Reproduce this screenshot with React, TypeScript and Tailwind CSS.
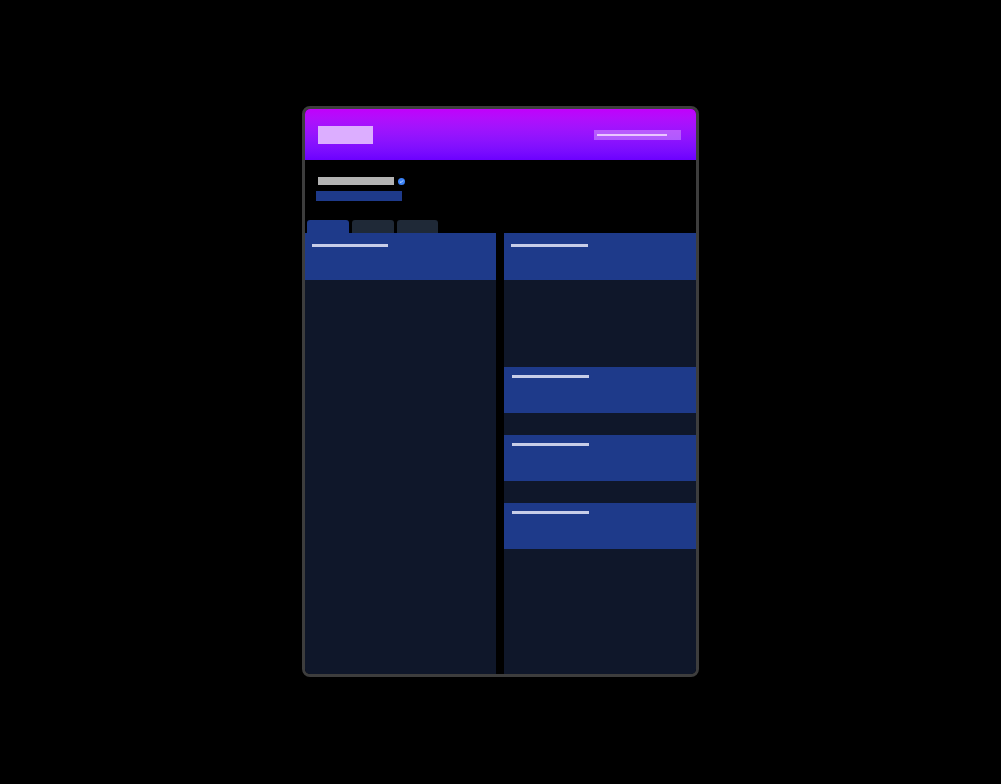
const tabs = [
  { key: "overview", active: true, width: "w-[42px]" },
  { key: "activity", active: false, width: "w-[42px]" },
  { key: "settings", active: false, width: "w-[41px]" },
];

function Bar({ className }: { className: string }) {
  return <div className={className} aria-hidden />;
}

function Card() {
  return (
    <div className="h-[46px] bg-[#1e3a8a] pt-[8px] pl-[8px]">
      <Bar className="h-[3px] w-[77px] bg-[#c7cde8]" />
    </div>
  );
}

export default function App() {
  return (
    <div
      className="flex h-screen w-full items-start justify-center bg-black pt-[106px]"
      style={{ fontFamily: "Inter, 'Liberation Sans', sans-serif" }}
    >
      <div className="flex h-[571px] w-[397px] flex-col overflow-hidden rounded-[8px] border-[3px] border-[#3d3d3d] bg-black">
        {/* header */}
        <header className="flex h-[51px] shrink-0 items-start justify-between bg-gradient-to-b from-[#c100fb] to-[#6c00ff] pl-[13px] pr-[15px]">
          <div className="mt-[17px] h-[18px] w-[55px] bg-[#dcaeff]" />
          <div className="mt-[21px] flex h-[10px] w-[87px] items-center bg-white/30 pl-[3px]">
            <div className="h-[2px] w-[70px] bg-[#e9c6ff]" />
          </div>
        </header>

        {/* profile */}
        <div className="flex shrink-0 flex-col pl-[11px] pt-[17px]">
          <div className="flex items-center gap-[4px] pl-[2px]">
            <div className="h-[8px] w-[76px] bg-[#b3b3b3]" />
            <span className="flex h-[7px] w-[7px] items-center justify-center rounded-full bg-[#3b82f6]">
              <svg viewBox="0 0 8 8" className="h-[5px] w-[5px]" aria-hidden>
                <path d="M1.5 4.2 L3.2 5.8 L6.5 2.2" fill="none" stroke="#dbeafe" strokeWidth="1.4" />
              </svg>
            </span>
          </div>
          <div className="mt-[6px] h-[10px] w-[86px] bg-[#1e3a8a]" />
        </div>

        {/* tabs */}
        <nav className="mt-[19px] flex shrink-0 gap-[3px] pl-[2px]">
          {tabs.map((tab) => (
            <div
              key={tab.key}
              className={`h-[13px] rounded-t-[3px] ${tab.width} ${tab.active ? "bg-[#1e3a8a]" : "bg-[#1f2937]"}`}
            />
          ))}
        </nav>

        {/* columns */}
        <div className="flex min-h-0 flex-1 gap-[8px]">
          <section className="flex w-[191px] flex-col bg-[#0f172a]">
            <div className="h-[47px] shrink-0 bg-[#1e3a8a] pl-[7px] pt-[11px]">
              <Bar className="h-[3px] w-[76px] bg-[#c7cde8]" />
            </div>
          </section>
          <section className="flex flex-1 flex-col bg-[#0f172a]">
            <div className="h-[47px] shrink-0 bg-[#1e3a8a] pl-[7px] pt-[11px]">
              <Bar className="h-[3px] w-[77px] bg-[#c7cde8]" />
            </div>
            <div className="mt-[87px] flex flex-col gap-[22px]">
              <Card />
              <Card />
              <Card />
            </div>
          </section>
        </div>
      </div>
    </div>
  );
}
